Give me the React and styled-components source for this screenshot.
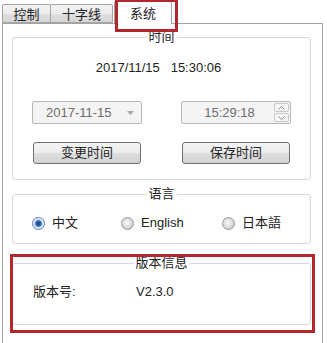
import React from 'react';
import styled, { createGlobalStyle } from 'styled-components';

const Global = createGlobalStyle`
  html, body { margin: 0; padding: 0; background: #fff; }
  body {
    font-family: "Liberation Sans", "Noto Sans CJK SC", sans-serif;
    font-size: 13px;
    line-height: 16px;
    color: #222;
  }
  * { box-sizing: border-box; }
`;

const Screen = styled.div`
  width: 327px;
  height: 343px;
  overflow: hidden;
  background: #fff;
`;

const TabBar = styled.div`
  position: relative;
  display: flex;
  align-items: flex-end;
  height: 23px;
  padding-left: 2px;
`;

const Tab = styled.div`
  position: relative;
  z-index: ${p => (p.$active ? 3 : 1)};
  width: ${p => p.$w}px;
  margin-left: ${p => p.$ml || 0}px;
  height: ${p => (p.$active ? 23 : 19)}px;
  margin-bottom: ${p => (p.$active ? -1 : 0)}px;
  padding-top: ${p => (p.$active ? 4 : 2)}px;
  text-align: center;
  border: 1px solid #a3a3a3;
  border-bottom: ${p => (p.$active ? 'none' : '1px solid #a3a3a3')};
  border-radius: 2px 2px 0 0;
  background: ${p =>
    p.$active ? '#ffffff' : 'linear-gradient(#f4f4f4 0%, #ececec 50%, #e0e0e0 51%, #d6d6d6 100%)'};
  color: #222;
`;

const TabMark = styled.div`
  position: absolute;
  left: 115px;
  top: -1px;
  width: 63px;
  height: 33px;
  border: 3px solid #b3262d;
  z-index: 10;
  pointer-events: none;
`;

const Panel = styled.div`
  position: relative;
  z-index: 2;
  margin-left: 2px;
  width: 321px;
  height: 330px;
  border: 1px solid #a3a3a3;
  background: #fff;
  padding: 13px 11px 0 9px;
`;

const Group = styled.div`
  position: relative;
  margin-top: ${p => p.$mt}px;
  padding: ${p => p.$pad};
  border: 1px solid #d8d8d8;
  border-radius: 3px;
`;

const GroupTitle = styled.span`
  position: absolute;
  top: -9px;
  left: 50%;
  transform: translateX(-50%);
  padding: 0 2px;
  background: #fff;
  white-space: nowrap;
`;

const Highlight = styled.div`
  position: absolute;
  top: -10px;
  right: -5px;
  bottom: -9px;
  left: -3px;
  border: 3px solid #b3262d;
  pointer-events: none;
`;

const Clock = styled.div`
  text-align: center;
  white-space: pre;
  padding-right: 6px;
`;

const Row = styled.div`
  display: flex;
  justify-content: space-between;
  margin-top: ${p => p.$mt}px;
  padding: 0 ${p => p.$px}px;
`;

const Combo = styled.div`
  display: flex;
  align-items: center;
  width: 110px;
  height: 23px;
  border: 1px solid #b5b9bc;
  border-radius: 2px;
  background: #f4f4f4;
  color: #6d6d6d;
`;

const ComboText = styled.span`
  flex: 1;
  padding-left: 13px;
`;

const ComboArrow = styled.span`
  width: 18px;
  display: flex;
  justify-content: center;
  padding-right: 3px;
`;

const Spin = styled.div`
  display: flex;
  width: 110px;
  height: 23px;
  border: 1px solid #b5b9bc;
  border-radius: 2px;
  background: #f4f4f4;
  color: #6d6d6d;
  padding: 1px;
`;

const SpinText = styled.span`
  flex: 1;
  text-align: center;
  line-height: 19px;
  padding-left: 2px;
`;

const SpinButtons = styled.div`
  display: flex;
  flex-direction: column;
  width: 15px;
  gap: 1px;
`;

const SpinBtn = styled.div`
  flex: 1;
  display: flex;
  align-items: center;
  justify-content: center;
  border: 1px solid #c9c9c9;
  border-radius: 2px;
  background: #f7f7f7;
`;

const Button = styled.div`
  width: 108px;
  height: 22px;
  border: 1px solid #707070;
  border-radius: 3px;
  background: linear-gradient(#f4f4f4 0%, #ececec 50%, #dfdfdf 51%, #d2d2d2 100%);
  text-align: center;
  line-height: 20px;
  color: #222;
`;

const RadioGrid = styled.div`
  display: grid;
  grid-template-columns: 89px 101px auto;
  padding-left: 19px;
`;

const RadioItem = styled.label`
  display: flex;
  align-items: center;
  gap: 7px;
`;

const RadioDot = styled.span`
  width: 13px;
  height: 13px;
  border-radius: 50%;
  border: 1px solid ${p => (p.$checked ? '#5a7cad' : '#9a9a9a')};
  background: ${p =>
    p.$checked
      ? 'radial-gradient(circle, #153f7c 0, #2d66b3 2.5px, #8fb1dc 3.5px, #e7eef7 4.5px, #f2f2f2 6px)'
      : 'radial-gradient(circle at 45% 45%, #fafafa 0, #e6e6e6 3px, #cfcfcf 6px)'};
`;

const InfoRow = styled.div`
  display: flex;
  padding-left: 20px;
`;

const InfoLabel = styled.span`
  width: 103px;
`;

function ChevronUp() {
  return (
    <svg width="7" height="4" viewBox="0 0 7 4">
      <polyline points="0.5,3.5 3.5,0.5 6.5,3.5" fill="none" stroke="#8a8a8a" strokeWidth="1" />
    </svg>
  );
}

function ChevronDown() {
  return (
    <svg width="7" height="4" viewBox="0 0 7 4">
      <polyline points="0.5,0.5 3.5,3.5 6.5,0.5" fill="none" stroke="#8a8a8a" strokeWidth="1" />
    </svg>
  );
}

function Caret() {
  return (
    <svg width="7" height="4" viewBox="0 0 7 4">
      <polygon points="0,0 7,0 3.5,4" fill="#a8a8a8" />
    </svg>
  );
}

export default function App() {
  return (
    <Screen>
      <Global />
      <TabBar>
        <Tab $w={49}>控制</Tab>
        <Tab $w={63} $ml={-1}>十字线</Tab>
        <Tab $w={58} $ml={1} $active>系统</Tab>
        <TabMark />
      </TabBar>
      <Panel>
        <Group $mt={0} $pad="22px 0 15px 0">
          <GroupTitle>时间</GroupTitle>
          <Clock>{'2017/11/15   15:30:06'}</Clock>
          <Row $mt={25} $px={19}>
            <Combo>
              <ComboText>2017-11-15</ComboText>
              <ComboArrow><Caret /></ComboArrow>
            </Combo>
            <Spin>
              <SpinText>15:29:18</SpinText>
              <SpinButtons>
                <SpinBtn><ChevronUp /></SpinBtn>
                <SpinBtn><ChevronDown /></SpinBtn>
              </SpinButtons>
            </Spin>
          </Row>
          <Row $mt={18} $px={20}>
            <Button>变更时间</Button>
            <Button>保存时间</Button>
          </Row>
        </Group>
        <Group $mt={14} $pad="20px 0 12px 0">
          <GroupTitle>语言</GroupTitle>
          <RadioGrid>
            <RadioItem><RadioDot $checked />中文</RadioItem>
            <RadioItem><RadioDot />English</RadioItem>
            <RadioItem><RadioDot />日本語</RadioItem>
          </RadioGrid>
        </Group>
        <Group $mt={19} $pad="20px 0 24px 0">
          <GroupTitle>版本信息</GroupTitle>
          <InfoRow>
            <InfoLabel>版本号:</InfoLabel>
            <span>V2.3.0</span>
          </InfoRow>
          <Highlight />
        </Group>
      </Panel>
    </Screen>
  );
}
